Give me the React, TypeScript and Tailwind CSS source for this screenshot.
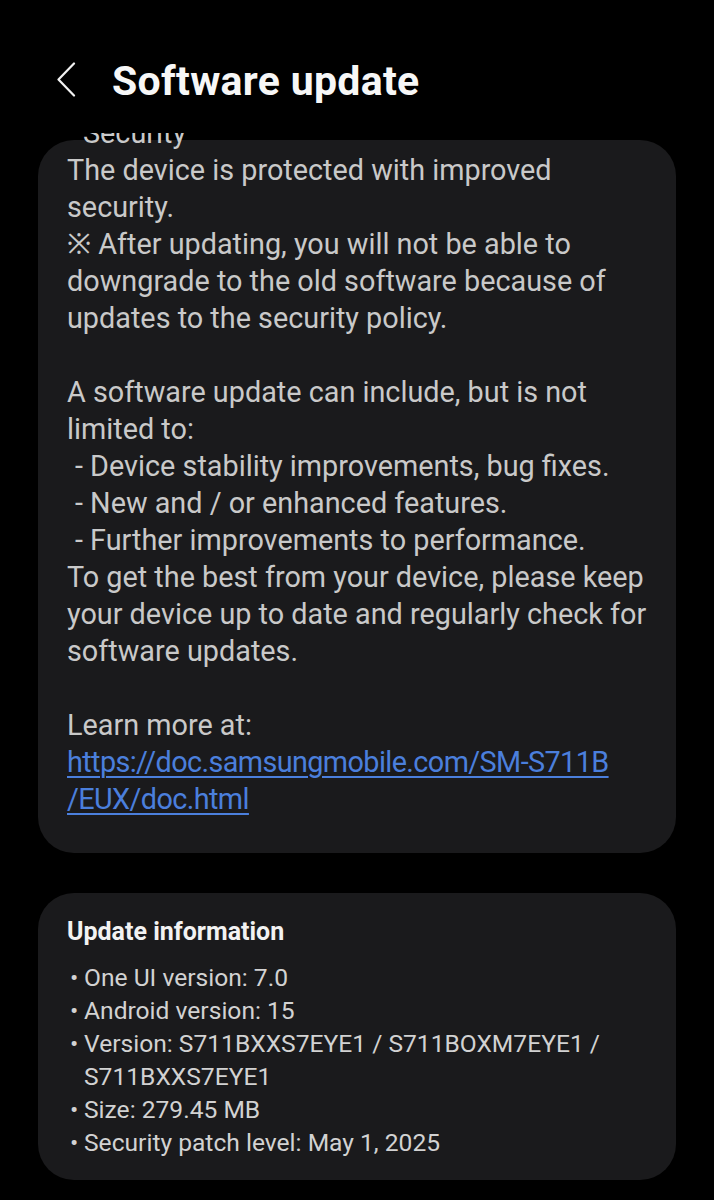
const body = "font-['Roboto','Noto_Sans','Noto_Sans_CJK_JP',sans-serif]"

function BackIcon() {
  return (
    <svg width="20" height="35" viewBox="0 0 20 35" fill="none" className="shrink-0">
      <polyline points="18,1.5 2.5,17.5 18,33.5" stroke="#f2f2f2" strokeWidth="2.2" strokeLinecap="round" strokeLinejoin="round" />
    </svg>
  )
}

function Dash({ children }: { children: React.ReactNode }) {
  return <div className="pl-[8px]">- {children}</div>
}

function Bullet({ children }: { children: React.ReactNode }) {
  return (
    <div className="flex">
      <span className="w-[17px] shrink-0 pl-[3px]">•</span>
      <span>{children}</span>
    </div>
  )
}

export default function App() {
  return (
    <div className={`min-h-[1200px] h-[1200px] w-full bg-black flex flex-col overflow-hidden ${body}`}>
      <header className="h-[133px] shrink-0 flex items-start pt-[62px] pl-[56px] gap-[36px]">
        <BackIcon />
        <h1 className="text-[41px] leading-[38px] font-bold text-[#f7f7f7] tracking-[0.3px]">Software update</h1>
      </header>

      <div className="flex-1 overflow-hidden flex flex-col">
        <section className="mx-[38px] mt-[7px] rounded-[36px] bg-[#1a1a1c] px-[29px] pb-[35px] text-[28.8px] leading-[37px] text-[#c9c9c9] whitespace-nowrap">
          <div className="-mt-[25px] pl-[16px]">Security</div>
          <div>The device is protected with improved</div>
          <div>security.</div>
          <div>※ After updating, you will not be able to</div>
          <div>downgrade to the old software because of</div>
          <div>updates to the security policy.</div>
          <div className="h-[37px]" />
          <div>A software update can include, but is not</div>
          <div>limited to:</div>
          <Dash>Device stability improvements, bug fixes.</Dash>
          <Dash>New and / or enhanced features.</Dash>
          <Dash>Further improvements to performance.</Dash>
          <div>To get the best from your device, please keep</div>
          <div>your device up to date and regularly check for</div>
          <div>software updates.</div>
          <div className="h-[37px]" />
          <div>Learn more at:</div>
          <a href="#" className="block text-[#4b7fdc] tracking-[-0.6px] underline decoration-[1.5px] underline-offset-[4px]">
            https://doc.samsungmobile.com/SM-S711B
            <br />
            /EUX/doc.html
          </a>
        </section>

        <section className="mx-[38px] mt-[40px] rounded-[36px] bg-[#1a1a1c] px-[29px] pt-[24px] pb-[21px]">
          <h2 className="text-[25px] leading-[30px] font-bold text-[#f2f2f2]">Update information</h2>
          <div className="mt-[14px] text-[24.6px] leading-[33px] text-[#d2d2d2]">
            <Bullet>One UI version: 7.0</Bullet>
            <Bullet>Android version: 15</Bullet>
            <Bullet>
              Version: S711BXXS7EYE1 / S711BOXM7EYE1 /
              <br />
              S711BXXS7EYE1
            </Bullet>
            <Bullet>Size: 279.45 MB</Bullet>
            <Bullet>Security patch level: May 1, 2025</Bullet>
          </div>
        </section>
      </div>
    </div>
  )
}
